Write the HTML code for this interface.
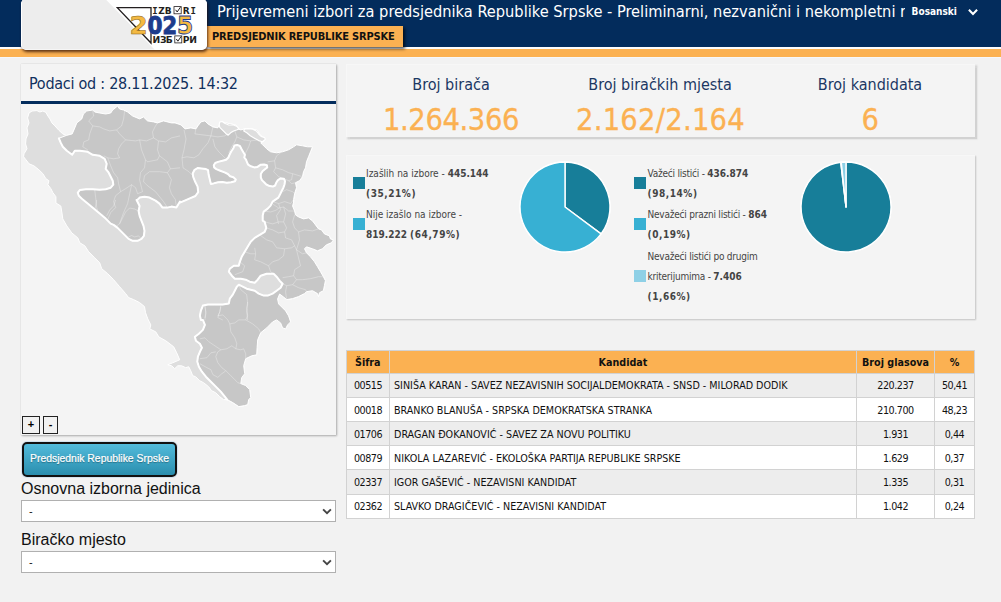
<!DOCTYPE html>
<html lang="bs">
<head>
<meta charset="utf-8">
<title>Prijevremeni izbori za predsjednika Republike Srpske</title>
<style>
html,body{margin:0;padding:0;}
body{width:1001px;height:602px;overflow:hidden;background:#f2f2f2;position:relative;
  font-family:"DejaVu Sans Condensed","Liberation Sans",sans-serif;color:#222;}
.abs{position:absolute;white-space:nowrap;}
.th{font-family:"DejaVu Sans Condensed","Liberation Sans",sans-serif;}
.ar{font-family:"Liberation Sans",sans-serif;}
#hdr{position:absolute;left:0;top:0;width:1001px;height:47px;background:#032c5c;}
#hwhite{position:absolute;left:0;top:47px;width:1001px;height:2px;background:#fbfcfd;}
#horange{position:absolute;left:0;top:49px;width:1001px;height:8px;background:#fbb152;}
#hlight{position:absolute;left:0;top:57px;width:1001px;height:1px;background:#f7f8fa;}
#title{left:217px;top:1px;width:688px;height:26px;overflow:hidden;color:#fff;font-size:16.25px;line-height:22px;}
#tab{left:207px;top:26px;width:196px;height:21px;background:#fbb152;box-shadow:2px 2px 3px rgba(0,0,0,.65);
  color:#111;font-weight:bold;font-size:11px;line-height:21px;}
#tab span{position:absolute;left:5px;top:0;letter-spacing:-0.17px;}
#lang{left:911.6px;top:5px;color:#fff;font-weight:bold;font-size:10px;line-height:14px;}
#logo{left:21px;top:-1px;width:186px;height:50.5px;border-radius:5px;background:#fff;
  box-shadow:1px 2px 3px rgba(40,10,0,.75);}
.panel{position:absolute;background:#f4f4f4;}
#lp{left:21px;top:64px;width:315px;height:371px;box-shadow:1px 1px 2px rgba(0,0,0,.28), 0 0 1px rgba(0,0,0,.18);}
#lpline{left:21px;top:101px;width:315px;height:3px;background:#032c5c;}
#podaci{left:29px;top:73.7px;font-size:16px;line-height:20px;color:#10305e;letter-spacing:-0.26px;}
#p1{left:346px;top:64px;width:629px;height:73px;box-shadow:1.5px 1.5px 1.5px 1px #d2d2d2, inset 1px 1px 0 #f7f7f7;}
#p2{left:346px;top:155px;width:629px;height:164px;box-shadow:1px 1px 1.5px rgba(0,0,0,.2), inset 1px 1px 0 #f7f7f7;}
.st{color:#1b3763;font-size:16px;line-height:20px;text-align:center;width:210px;}
.sv{color:#fbb152;-webkit-text-stroke:0.3px #fbb152;font-size:30.5px;line-height:36px;text-align:center;width:210px;letter-spacing:-0.4px;}
.zb{box-sizing:border-box;border:1px solid #222;background:#f1f1f1;color:#000;font-size:11px;font-weight:bold;text-align:center;line-height:15px;}
#btn{left:22px;top:442px;width:155px;height:35px;box-sizing:border-box;border:2px solid #111;border-radius:5px;
  background:linear-gradient(#52bbdb,#2a8eae);color:#fff;font-size:10.43px;line-height:30px;text-align:center;text-shadow:0 1px 1px rgba(0,0,0,.35);-webkit-text-stroke:0.2px #fff;box-shadow:0 0 0 1px rgba(200,220,235,.7);}
.lbl{font-size:16px;line-height:20px;color:#111;}
.sel{box-sizing:border-box;border:1px solid #b0b0b0;background:#fff;width:315px;height:22px;font-size:11px;line-height:20px;color:#111;}
.sel span{position:absolute;left:7px;top:0;}
.sel svg{position:absolute;right:2.3px;top:7px;}
.lg{font-size:10px;line-height:20px;color:#444;}
.lg b{color:#444;letter-spacing:0;}
.rl{letter-spacing:-0.22px;}
.lg .pc{letter-spacing:0.55px;}
.sq{position:absolute;width:12px;height:12px;}
table{position:absolute;left:346px;top:350px;border-collapse:collapse;font-size:10.67px;color:#111;table-layout:fixed;width:629px;}
td,th{border:1px solid #d2d2d2;padding:0;height:24px;box-sizing:border-box;}
th{background:#fbb152;font-weight:bold;height:23px;}
tr.o td{background:#ededed;}
tr.e td{background:#fff;}
td.c{text-align:center;letter-spacing:-0.45px;}
tr.r2 td,tr.r3 td,tr.r4 td{padding-top:2px;}
tr.r5 td{height:25px;}
td.l{text-align:left;padding-left:4px;}
</style>
</head>
<body>
<div id="hdr"></div><div id="hwhite"></div><div id="horange"></div><div id="hlight"></div>
<div id="title" class="abs th">Prijevremeni izbori za predsjednika Republike Srpske - Preliminarni, nezvanični i nekompletni rezultati</div>
<div id="tab" class="abs th"><span>PREDSJEDNIK REPUBLIKE SRPSKE</span></div>
<div id="lang" class="abs th">Bosanski</div>
<svg class="abs" style="left:967.2px;top:7.5px" width="12" height="9" viewBox="0 0 12 9"><path d="M1.9 1.8 L6 6 L10.1 1.8" fill="none" stroke="#fff" stroke-width="2.1"/></svg>
<div id="logo" class="abs"></div>
<svg class="abs" style="left:21px;top:0" width="190" height="52" viewBox="21 0 190 52">
<defs><clipPath id="lgc"><rect x="21" y="-1" width="186" height="50.5" rx="5" ry="5"/></clipPath></defs>
<g clip-path="url(#lgc)"><rect x="21" y="-6" width="186" height="56" fill="#fff"/><polygon points="22,-6 100.5,-6 155,50 22,50" fill="#ededed"/></g>
<path d="M117.3 7.6 H151 V43 Z" fill="none" stroke="#231f20" stroke-width="1.3" stroke-linejoin="miter"/>
<g font-family="'DejaVu Sans','Liberation Sans',sans-serif" font-weight="bold">
<text transform="translate(129.6 34) scale(1.07 1)" font-size="24.5" fill="#f4b942" stroke="#8a6516" stroke-width="0.5">2</text>
<text transform="translate(147.6 34) scale(0.88 1)" font-size="24.5" fill="#1d3c8c" stroke="#1d3c8c" stroke-width="0.9">0</text>
<text transform="translate(162.3 34) scale(0.88 1)" font-size="24.5" fill="#1d3c8c" stroke="#1d3c8c" stroke-width="0.8">2</text>
<text transform="translate(177 34) scale(0.95 1)" font-size="24.5" fill="#f4b942" stroke="#1d3c8c" stroke-width="0.9">5</text>
<text y="13.7" x="152.25 158.35 164.7" font-size="9" fill="#231f20"><tspan font-family="'DejaVu Sans Mono','Liberation Mono',monospace">I</tspan>ZB</text>
<text y="13.7" x="182.7 190.45" font-size="9" fill="#231f20">R<tspan font-family="'DejaVu Sans Mono','Liberation Mono',monospace">I</tspan></text>
<text y="42.9" x="152.4 159.9 165.7" font-size="9.2" fill="#231f20">ИЗБ</text>
<text y="42.9" x="182.7 189.2" font-size="9.2" fill="#231f20">РИ</text>
</g>
<rect x="174" y="6.6" width="7.2" height="7.2" fill="#fff" stroke="#231f20" stroke-width="0.8"/>
<path d="M175.6 9.8 L177.2 12 L180.4 7.2" fill="none" stroke="#231f20" stroke-width="1"/>
<rect x="174.8" y="35.9" width="7" height="7" fill="#fff" stroke="#231f20" stroke-width="0.8"/>
<path d="M176.3 39 L177.9 41.2 L181.2 36.4" fill="none" stroke="#231f20" stroke-width="1"/>
</svg>

<div id="lp" class="panel"></div>
<div id="lpline" class="abs"></div>
<div id="podaci" class="abs th">Podaci od : 28.11.2025. 14:32</div>
<!--MAPSTART--><svg class="abs" style="left:21px;top:104px" width="315" height="331" viewBox="21 104 315 331">
<path d="M66.2 135.5 L72.2 133.9 L74.8 127.9 L76.8 122.9 L81.8 118.9 L83.4 114.0 L86.7 111.0 L92.7 110.0 L94.7 112.0 L99.7 113.0 L105.7 114.0 L110.7 113.0 L112.7 110.0 L117.6 106.0 L119.6 109.0 L123.6 110.0 L127.6 112.0 L132.6 116.0 L139.6 118.9 L143.5 117.0 L147.5 120.9 L153.5 121.9 L157.5 122.9 L163.5 120.9 L171.4 122.9 L175.0 122.9 L181.0 124.9 L185.0 128.9 L190.9 127.9 L195.9 128.9 L197.9 125.9 L200.9 121.9 L204.9 120.9 L207.9 123.9 L212.9 126.9 L217.8 127.9 L219.8 123.9 L221.8 121.9 L225.8 122.9 L230.8 123.9 L235.8 124.9 L237.8 128.9 L240.8 129.9 L244.7 128.9 L251.7 128.9 L256.7 129.9 L259.7 133.9 L262.7 137.9 L264.7 140.9 L260.7 142.9 L262.7 144.8 L266.7 148.8 L270.6 151.8 L276.6 152.8 L282.6 151.8 L288.6 149.8 L293.6 146.8 L296.5 144.8 L302.5 145.8 L307.5 146.8 L312.5 146.8 L310.5 151.8 L308.5 156.8 L306.5 161.8 L305.5 167.8 L303.5 171.7 L302.5 176.7 L299.5 180.7 L295.5 182.7 L296.5 187.7 L294.6 193.7 L293.6 199.6 L293.6 202.0 L292.6 206.0 L294.6 211.0 L295.5 214.9 L298.5 216.9 L303.5 218.9 L308.5 217.9 L312.5 220.9 L315.5 224.9 L318.5 228.9 L321.5 229.9 L324.4 233.9 L329.4 235.9 L330.4 238.9 L333.4 239.9 L331.4 242.8 L326.4 244.8 L322.4 248.8 L317.5 250.8 L312.5 248.8 L306.5 246.8 L304.5 248.8 L306.5 252.8 L310.5 256.8 L314.5 261.8 L317.5 266.7 L320.5 271.7 L323.4 276.7 L325.4 280.7 L324.4 285.7 L323.4 290.7 L319.5 292.7 L318.5 296.6 L317.5 293.6 L312.5 290.7 L306.5 291.7 L304.5 293.6 L298.5 296.6 L292.6 298.6 L286.6 299.6 L283.6 297.0 L279.6 294.0 L277.6 299.0 L278.6 303.9 L282.6 307.9 L285.6 310.9 L288.6 315.9 L290.6 321.9 L287.6 324.9 L285.6 328.9 L282.6 327.9 L280.6 322.9 L276.6 319.9 L272.6 321.9 L266.7 327.9 L260.7 332.8 L257.7 339.8 L257.1 347.8 L256.7 354.8 L251.7 355.8 L245.7 358.7 L243.7 365.7 L244.7 373.7 L241.7 377.7 L240.8 383.6 L245.7 385.6 L249.7 389.6 L250.7 397.6 L248.7 399.6 L247.7 404.6 L244.7 405.6 L238.8 406.6 L232.8 402.6 L227.2 399.6 L223.5 399.6 L219.6 396.6 L215.6 392.7 L211.6 390.7 L208.6 386.7 L203.6 382.7 L199.6 380.7 L195.6 376.7 L192.7 375.7 L190.7 370.7 L188.7 366.7 L185.7 367.7 L181.7 365.8 L177.7 365.8 L174.7 368.7 L171.7 365.8 L167.7 364.8 L172.7 362.8 L179.7 359.8 L176.7 352.8 L173.7 346.8 L165.8 340.8 L158.8 336.9 L155.8 331.9 L149.8 328.9 L150.8 324.9 L147.8 318.9 L145.5 312.6 L144.5 306.6 L139.6 302.6 L133.6 299.6 L128.6 297.6 L125.6 293.6 L119.6 286.7 L113.6 279.7 L107.7 273.7 L101.7 268.7 L99.7 262.8 L94.7 257.8 L88.7 251.8 L84.8 245.8 L79.8 242.8 L77.8 237.9 L71.8 232.9 L66.8 225.9 L62.8 218.9 L61.8 212.0 L60.8 206.0 L55.9 203.0 L55.9 196.7 L52.9 192.7 L50.9 188.7 L47.9 184.7 L48.9 180.7 L45.9 178.7 L42.9 173.7 L38.9 169.8 L33.9 165.8 L29.0 163.8 L26.0 159.8 L23.6 156.8 L24.0 153.8 L27.0 148.8 L25.6 143.9 L26.0 138.9 L28.0 133.9 L27.0 127.9 L29.0 122.9 L27.6 117.9 L29.0 113.0 L32.0 111.0 L36.9 110.6 L39.9 112.0 L42.9 111.0 L45.9 112.4 L47.9 116.0 L49.9 118.9 L51.9 122.9 L54.9 125.9 L58.9 130.3 L62.8 133.9 Z" fill="#dedede" stroke="#fff" stroke-width="1" stroke-linejoin="round"/>
<path d="M58.9 138.3 L60.8 142.9 L62.8 146.8 L66.8 150.8 L72.2 154.8 L74.8 150.8 L79.8 150.8 L87.7 151.8 L92.7 154.8 L99.7 155.8 L104.7 158.8 L106.7 163.8 L105.7 168.8 L108.7 172.7 L110.7 176.7 L112.7 180.7 L113.3 184.7 L110.7 187.7 L105.7 189.3 L99.7 189.7 L92.7 189.3 L85.8 189.3 L79.8 190.1 L77.8 192.7 L78.8 195.7 L82.8 199.6 L87.7 203.6 L93.7 208.6 L99.7 213.6 L105.7 218.6 L110.7 223.6 L113.6 224.9 L117.6 227.9 L121.6 231.9 L125.6 235.9 L128.6 238.9 L132.6 240.8 L137.6 240.8 L141.5 238.9 L143.9 235.9 L144.5 230.9 L143.5 225.9 L141.5 220.9 L139.6 215.9 L138.6 211.0 L139.6 206.0 L137.6 202.0 L136.6 200.0 L137.6 199.6 L139.6 197.6 L144.5 196.7 L149.5 197.6 L155.5 200.6 L159.5 203.6 L162.5 207.6 L167.4 207.6 L171.4 206.6 L176.4 207.6 L180.0 201.6 L180.0 202.6 L187.0 199.6 L195.4 196.0 L198.2 192.1 L197.6 186.6 L194.9 181.2 L193.2 176.8 L192.7 173.5 L194.3 170.2 L197.6 168.0 L201.5 168.5 L205.9 169.1 L208.1 170.2 L208.6 174.6 L209.7 179.0 L210.8 183.9 L213.6 183.4 L218.0 182.3 L222.4 182.0 L226.8 182.8 L231.2 182.3 L235.0 181.2 L235.8 179.5 L233.4 177.3 L230.1 176.2 L227.9 174.0 L224.6 172.4 L220.2 170.7 L216.3 169.1 L214.1 167.4 L213.8 165.2 L215.2 163.0 L218.0 161.9 L222.4 160.8 L226.2 159.7 L228.4 157.5 L229.5 154.8 L231.2 151.5 L233.4 148.2 L234.5 145.4 L237.2 144.9 L239.9 146.0 L241.6 149.3 L243.2 152.0 L244.9 154.8 L244.3 157.5 L246.0 159.7 L247.1 162.5 L248.2 164.7 L250.9 166.3 L254.2 167.4 L257.5 166.9 L260.8 164.7 L264.1 164.5 L266.9 165.2 L267.2 167.4 L265.2 169.1 L262.5 171.3 L260.8 174.0 L260.8 177.3 L261.9 180.1 L264.1 182.3 L266.3 184.5 L269.6 186.1 L272.9 186.6 L275.1 185.5 L276.2 182.8 L277.9 180.1 L280.6 178.4 L283.9 178.7 L285.0 181.2 L284.5 184.5 L283.4 187.7 L281.7 191.0 L280.1 194.3 L278.4 197.6 L272.6 201.6 L270.6 205.6 L267.7 208.6 L263.7 211.6 L262.7 215.6 L262.7 220.6 L264.7 221.9 L266.3 227.9 L264.7 231.9 L259.7 234.9 L254.7 237.9 L250.7 241.8 L247.7 246.8 L244.7 251.8 L241.7 256.8 L239.8 261.8 L238.8 265.8 L233.8 265.8 L229.8 268.7 L228.8 271.7 L231.8 275.7 L234.8 278.7 L240.8 278.7 L245.7 279.7 L249.7 281.7 L254.7 282.7 L257.7 279.7 L260.7 275.7 L266.7 273.7 L273.6 273.7 L276.6 276.7 L279.6 280.7 L282.6 283.7 L280.6 287.7 L276.6 290.7 L272.6 293.6 L267.7 295.6 L263.7 295.6 L258.7 293.6 L254.7 290.7 L250.7 289.7 L246.7 288.7 L242.7 286.7 L238.8 284.7 L236.8 286.7 L234.8 290.7 L232.8 294.6 L229.8 298.6 L228.8 303.6 L222.8 304.6 L214.9 304.6 L207.9 304.6 L202.9 305.6 L200.9 310.6 L199.9 315.6 L200.9 320.0 L202.9 319.9 L204.9 324.9 L202.9 329.9 L198.9 333.8 L194.9 336.8 L195.9 340.8 L199.9 343.8 L201.9 347.8 L199.9 351.8 L197.9 356.7 L197.3 361.7 L198.9 366.7 L201.9 371.7 L205.9 376.7 L210.9 381.7 L215.8 386.6 L220.8 391.6 L224.8 396.6 L227.2 399.6 L227.2 399.6 L232.8 402.6 L238.8 406.6 L244.7 405.6 L247.7 404.6 L248.7 399.6 L250.7 397.6 L249.7 389.6 L245.7 385.6 L240.8 383.6 L241.7 377.7 L244.7 373.7 L243.7 365.7 L245.7 358.7 L251.7 355.8 L256.7 354.8 L257.1 347.8 L257.7 339.8 L260.7 332.8 L266.7 327.9 L272.6 321.9 L276.6 319.9 L280.6 322.9 L282.6 327.9 L285.6 328.9 L287.6 324.9 L290.6 321.9 L288.6 315.9 L285.6 310.9 L282.6 307.9 L278.6 303.9 L277.6 299.0 L279.6 294.0 L283.6 297.0 L286.6 299.6 L292.6 298.6 L298.5 296.6 L304.5 293.6 L306.5 291.7 L312.5 290.7 L317.5 293.6 L318.5 296.6 L319.5 292.7 L323.4 290.7 L324.4 285.7 L325.4 280.7 L323.4 276.7 L320.5 271.7 L317.5 266.7 L314.5 261.8 L310.5 256.8 L306.5 252.8 L304.5 248.8 L306.5 246.8 L312.5 248.8 L317.5 250.8 L322.4 248.8 L326.4 244.8 L331.4 242.8 L333.4 239.9 L330.4 238.9 L329.4 235.9 L324.4 233.9 L321.5 229.9 L318.5 228.9 L315.5 224.9 L312.5 220.9 L308.5 217.9 L303.5 218.9 L298.5 216.9 L295.5 214.9 L294.6 211.0 L292.6 206.0 L293.6 202.0 L293.6 199.6 L294.6 193.7 L296.5 187.7 L295.5 182.7 L299.5 180.7 L302.5 176.7 L303.5 171.7 L305.5 167.8 L306.5 161.8 L308.5 156.8 L310.5 151.8 L312.5 146.8 L307.5 146.8 L302.5 145.8 L296.5 144.8 L293.6 146.8 L288.6 149.8 L282.6 151.8 L276.6 152.8 L270.6 151.8 L266.7 148.8 L262.7 144.8 L260.7 142.9 L264.7 140.9 L262.7 137.9 L259.7 133.9 L256.7 129.9 L251.7 128.9 L244.7 128.9 L240.8 129.9 L237.8 128.9 L235.8 124.9 L230.8 123.9 L225.8 122.9 L221.8 121.9 L219.8 123.9 L217.8 127.9 L212.9 126.9 L207.9 123.9 L204.9 120.9 L200.9 121.9 L197.9 125.9 L195.9 128.9 L190.9 127.9 L185.0 128.9 L181.0 124.9 L175.0 122.9 L171.4 122.9 L163.5 120.9 L157.5 122.9 L153.5 121.9 L147.5 120.9 L143.5 117.0 L139.6 118.9 L132.6 116.0 L127.6 112.0 L123.6 110.0 L119.6 109.0 L117.6 106.0 L112.7 110.0 L110.7 113.0 L105.7 114.0 L99.7 113.0 L94.7 112.0 L92.7 110.0 L86.7 111.0 L83.4 114.0 L81.8 118.9 L76.8 122.9 L74.8 127.9 L72.2 133.9 L66.2 135.5 Z" fill="#c7c7c7" stroke="#fff" stroke-width="1" stroke-linejoin="round"/>
<path d="M58.9 138.3 L60.8 142.9 L62.8 146.8 L66.8 150.8 L72.2 154.8 L74.8 150.8 L79.8 150.8 L87.7 151.8 L92.7 154.8 L99.7 155.8 L104.7 158.8 L106.7 163.8 L105.7 168.8 L108.7 172.7 L110.7 176.7 L112.7 180.7 L113.3 184.7 L110.7 187.7 L105.7 189.3 L99.7 189.7 L92.7 189.3 L85.8 189.3 L79.8 190.1 L77.8 192.7 L78.8 195.7 L82.8 199.6 L87.7 203.6 L93.7 208.6 L99.7 213.6 L105.7 218.6 L110.7 223.6 L113.6 224.9 L117.6 227.9 L121.6 231.9 L125.6 235.9 L128.6 238.9 L132.6 240.8 L137.6 240.8 L141.5 238.9 L143.9 235.9 L144.5 230.9 L143.5 225.9 L141.5 220.9 L139.6 215.9 L138.6 211.0 L139.6 206.0 L137.6 202.0 L136.6 200.0 L137.6 199.6 L139.6 197.6 L144.5 196.7 L149.5 197.6 L155.5 200.6 L159.5 203.6 L162.5 207.6 L167.4 207.6 L171.4 206.6 L176.4 207.6 L180.0 201.6 L180.0 202.6 L187.0 199.6 L195.4 196.0 L198.2 192.1 L197.6 186.6 L194.9 181.2 L193.2 176.8 L192.7 173.5 L194.3 170.2 L197.6 168.0 L201.5 168.5 L205.9 169.1 L208.1 170.2 L208.6 174.6 L209.7 179.0 L210.8 183.9 L213.6 183.4 L218.0 182.3 L222.4 182.0 L226.8 182.8 L231.2 182.3 L235.0 181.2 L235.8 179.5 L233.4 177.3 L230.1 176.2 L227.9 174.0 L224.6 172.4 L220.2 170.7 L216.3 169.1 L214.1 167.4 L213.8 165.2 L215.2 163.0 L218.0 161.9 L222.4 160.8 L226.2 159.7 L228.4 157.5 L229.5 154.8 L231.2 151.5 L233.4 148.2 L234.5 145.4 L237.2 144.9 L239.9 146.0 L241.6 149.3 L243.2 152.0 L244.9 154.8 L244.3 157.5 L246.0 159.7 L247.1 162.5 L248.2 164.7 L250.9 166.3 L254.2 167.4 L257.5 166.9 L260.8 164.7 L264.1 164.5 L266.9 165.2 L267.2 167.4 L265.2 169.1 L262.5 171.3 L260.8 174.0 L260.8 177.3 L261.9 180.1 L264.1 182.3 L266.3 184.5 L269.6 186.1 L272.9 186.6 L275.1 185.5 L276.2 182.8 L277.9 180.1 L280.6 178.4 L283.9 178.7 L285.0 181.2 L284.5 184.5 L283.4 187.7 L281.7 191.0 L280.1 194.3 L278.4 197.6 L272.6 201.6 L270.6 205.6 L267.7 208.6 L263.7 211.6 L262.7 215.6 L262.7 220.6 L264.7 221.9 L266.3 227.9 L264.7 231.9 L259.7 234.9 L254.7 237.9 L250.7 241.8 L247.7 246.8 L244.7 251.8 L241.7 256.8 L239.8 261.8 L238.8 265.8 L233.8 265.8 L229.8 268.7 L228.8 271.7 L231.8 275.7 L234.8 278.7 L240.8 278.7 L245.7 279.7 L249.7 281.7 L254.7 282.7 L257.7 279.7 L260.7 275.7 L266.7 273.7 L273.6 273.7 L276.6 276.7 L279.6 280.7 L282.6 283.7 L280.6 287.7 L276.6 290.7 L272.6 293.6 L267.7 295.6 L263.7 295.6 L258.7 293.6 L254.7 290.7 L250.7 289.7 L246.7 288.7 L242.7 286.7 L238.8 284.7 L236.8 286.7 L234.8 290.7 L232.8 294.6 L229.8 298.6 L228.8 303.6 L222.8 304.6 L214.9 304.6 L207.9 304.6 L202.9 305.6 L200.9 310.6 L199.9 315.6 L200.9 320.0 L202.9 319.9 L204.9 324.9 L202.9 329.9 L198.9 333.8 L194.9 336.8 L195.9 340.8 L199.9 343.8 L201.9 347.8 L199.9 351.8 L197.9 356.7 L197.3 361.7 L198.9 366.7 L201.9 371.7 L205.9 376.7 L210.9 381.7 L215.8 386.6 L220.8 391.6 L224.8 396.6 L227.2 399.6" fill="none" stroke="#fff" stroke-width="2" stroke-linejoin="round" stroke-linecap="round"/>
<path d="M219.8 122.0 L222.2 121.4 L224.6 123.2 L228.8 125.0 L233.6 125.0 L236.6 126.2 L239.0 128.6 L237.2 129.8 L233.6 131.0 L230.6 132.8 L228.2 135.2 L225.8 133.4 L222.8 130.4 L219.8 127.4 L219.2 124.4 Z" fill="#dedede" stroke="#fff" stroke-width="1.2" stroke-linejoin="round"/>
<path d="M244.4 129.2 L248.0 128.6 L252.7 129.2 L256.3 131.0 L258.7 134.0 L261.1 136.4 L264.7 137.6 L265.3 139.4 L262.3 141.8 L258.7 140.6 L254.5 138.2 L250.3 135.8 L246.8 132.8 L243.8 131.0 Z" fill="#dedede" stroke="#fff" stroke-width="1.2" stroke-linejoin="round"/>
<path d="M92.7 111.0 L93.7 116.0 L88.7 120.9 L92.7 125.9 L99.7 126.9 L103.7 128.9 L109.7 130.9 L116.6 129.9 L121.6 125.9 L123.6 118.9 L124.6 111.0 M92.7 125.9 L89.7 133.9 L88.7 139.9 L83.8 141.9 L82.8 146.8 L87.7 149.8 M116.6 129.9 L119.6 133.9 L125.6 139.9 L121.6 143.9 L118.6 148.8 L117.6 153.8 L119.6 157.8 L113.6 158.8 L107.7 157.8 L103.7 155.8 M125.6 139.9 L135.6 140.9 L139.6 139.9 L146.5 140.9 L153.5 137.9 L152.5 131.9 L155.5 125.9 L157.5 122.9 M139.6 139.9 L141.5 149.8 L145.5 159.8 L144.5 167.8 L140.5 172.7 L139.6 179.7 L141.5 187.7 L142.5 191.7 L137.6 193.7 L135.6 187.7 L131.6 184.7 L125.6 188.7 L120.6 191.7 L118.6 183.7 L117.6 177.7 L113.6 172.7 L110.7 165.8 L107.7 157.8 M153.5 137.9 L158.5 140.9 L157.5 149.8 L159.5 155.8 L157.5 159.8 L147.5 161.8 L145.5 159.8 M159.5 155.8 L167.4 161.8 L170.4 168.8 L167.4 172.7 L171.4 179.7 L169.4 187.7 L171.4 193.7 L175.4 199.6 L176.4 207.6 M167.4 172.7 L159.5 171.7 L149.5 171.7 L144.5 175.7 L143.5 181.7 L147.5 185.7 L155.5 191.7 L163.5 201.6 L167.4 207.6 M158.5 140.9 L165.5 141.9 L171.4 137.9 L180.0 135.9 M170.4 168.8 L180.0 167.8 M120.6 191.7 L115.6 195.7 L113.6 201.6 L115.6 207.6 L110.7 212.6 L107.7 219.6 M94.7 189.7 L95.7 197.6 L96.7 207.6 L97.7 210.6 M131.6 184.7 L127.6 203.6 L123.6 212.6 L119.6 223.6 M184.0 129.9 L186.0 138.9 L184.0 149.8 L182.0 157.8 L183.0 167.8 M195.9 128.9 L194.9 133.9 L202.9 134.9 L210.9 135.9 L212.9 126.9 M210.9 135.9 L207.9 142.9 L202.9 148.8 L198.9 154.8 L193.9 157.8 L187.0 156.8 L182.0 157.8 M210.9 135.9 L217.8 136.9 L224.8 135.9 L227.8 133.9 M212.9 138.9 L214.9 146.8 L218.8 151.8 L223.8 156.8 L225.8 158.8 M234.8 130.9 L236.8 136.9 L234.8 141.9 L231.8 146.8 L228.8 152.8 M236.8 136.9 L243.7 139.9 L250.7 140.9 L257.7 139.9 M250.7 140.9 L248.7 146.8 L244.7 154.8 M267.7 161.8 L274.6 160.8 L276.6 155.8 L280.6 152.8 M274.6 160.8 L275.6 167.8 L273.6 171.7 L278.6 176.7 L283.6 178.7 M275.6 167.8 L282.6 169.8 L288.6 172.7 L292.6 173.7 L291.6 179.7 L288.6 180.7 L283.6 178.7 M292.6 173.7 L302.5 176.7 M288.6 180.7 L291.6 183.7 L295.5 182.7 M282.6 191.7 L286.6 189.7 L292.6 191.7 L294.6 193.7 M272.6 201.6 L278.6 203.6 L284.6 201.6 L290.6 203.6 L293.6 199.6 M278.6 203.6 L280.6 209.6 L276.6 215.6 L278.6 224.0 M183.0 167.8 L188.9 171.7 L192.9 175.7 M272.6 204.0 L278.6 208.0 L283.6 207.0 L288.6 211.0 L294.6 211.0 M263.7 211.0 L270.6 212.0 L276.6 210.0 L278.6 208.0 M283.6 207.0 L285.6 213.9 L283.6 221.9 L286.6 227.9 L284.6 231.9 L285.6 237.9 L291.6 239.9 L294.6 245.8 L296.5 249.8 M264.7 221.9 L272.6 223.9 L278.6 221.9 L283.6 221.9 M266.3 227.9 L272.6 229.9 L278.6 232.9 L284.6 231.9 M294.6 214.9 L292.6 221.9 L294.6 227.9 L298.5 231.9 L304.5 229.9 L312.5 230.9 L318.5 228.9 M298.5 231.9 L299.5 239.9 L296.5 249.8 L302.5 253.8 L306.5 252.8 M259.7 234.9 L266.7 239.9 L272.6 241.8 L276.6 247.8 L284.6 248.8 L291.6 247.8 L294.6 245.8 M284.6 248.8 L283.6 255.8 L278.6 259.8 L272.6 261.8 L268.6 265.8 L270.6 271.7 L273.6 273.7 M254.7 247.8 L255.7 253.8 L254.7 259.8 L260.7 261.8 L268.6 265.8 M244.7 251.8 L250.7 253.8 L255.7 253.8 M239.8 261.8 L244.7 265.8 L242.7 271.7 L234.8 274.7 M296.5 249.8 L298.5 257.8 L300.5 265.8 L294.6 269.7 L293.6 275.7 L296.5 279.7 L302.5 279.7 L310.5 278.7 L318.5 276.7 L323.4 276.7 M282.6 277.7 L288.6 276.7 L293.6 275.7 M296.5 279.7 L292.6 284.7 L286.6 285.7 L282.6 283.7 M286.6 285.7 L285.6 291.7 L286.6 299.6 M292.6 284.7 L298.5 287.7 L305.5 289.7 L306.5 291.7 M238.8 284.7 L240.8 289.7 L246.7 294.6 L247.7 303.6 L246.7 311.6 L247.7 320.0 M204.9 305.6 L205.9 313.6 L204.9 320.0 M220.8 305.6 L219.8 311.6 L217.8 317.6 L222.8 320.0 M247.7 302.0 L246.7 307.9 L247.7 315.9 L245.7 319.9 M204.9 305.9 L205.9 311.9 L204.9 317.9 M220.8 306.9 L219.8 311.9 L217.8 315.9 L222.8 314.9 L227.8 319.9 L229.8 323.9 L234.8 322.9 L238.8 319.9 L245.7 319.9 L252.7 323.9 L258.7 328.9 L260.7 332.8 M229.8 323.9 L230.8 331.8 L234.8 337.8 L236.8 343.8 L235.8 348.8 L240.8 349.8 L243.7 348.8 L245.7 353.8 L245.7 358.7 M235.8 348.8 L231.8 345.8 L226.8 348.8 L220.8 349.8 L214.9 345.8 L208.9 341.8 L204.9 337.8 L199.9 338.8 M220.8 349.8 L217.8 351.8 L215.8 356.7 L217.8 362.7 L221.8 367.7 L225.8 370.7 L230.8 375.7 L234.8 379.7 L237.8 382.7 L240.8 383.6 M215.8 351.8 L210.9 352.8 L206.9 357.7 L199.9 358.7 M199.9 363.7 L206.9 367.7 L210.9 369.7 L212.9 374.7 L217.8 377.3 L221.8 373.7 L224.8 371.7 L225.8 370.7 M96.7 200.0 L95.7 206.0 L94.7 209.0 M115.6 200.0 L113.6 206.0 L109.7 210.0 L106.7 215.9 M129.6 208.0 L125.6 212.0 L122.6 217.9 L119.6 223.9 L116.6 225.9 M129.6 208.0 L134.6 209.0 L138.6 211.0 M128.6 236.9 L131.6 235.5 L134.6 236.9 L138.6 235.9 L141.5 238.9" fill="none" stroke="#fff" stroke-opacity="0.5" stroke-width="0.6" stroke-linejoin="round"/>
</svg><!--MAPEND-->
<div class="abs zb ar" style="left:22px;top:416px;width:18px;height:18px;">+</div>
<div class="abs zb ar" style="left:43px;top:416px;width:15px;height:18px;">-</div>
<div id="btn" class="abs ar">Predsjednik Republike Srpske</div>
<div class="abs lbl ar" style="left:21px;top:479px;">Osnovna izborna jedinica</div>
<div class="abs sel ar" style="left:21px;top:500px;"><span>-</span><svg width="12" height="8" viewBox="0 0 12 8"><path d="M2.1 1.4 L6 5.2 L9.9 1.4" fill="none" stroke="#444" stroke-width="1.9"/></svg></div>
<div class="abs lbl ar" style="left:21px;top:530px;">Biračko mjesto</div>
<div class="abs sel ar" style="left:21px;top:551px;"><span>-</span><svg width="12" height="8" viewBox="0 0 12 8"><path d="M2.1 1.4 L6 5.2 L9.9 1.4" fill="none" stroke="#444" stroke-width="1.9"/></svg></div>

<div id="p1" class="panel"></div>
<div class="abs st th" style="left:346px;top:75px;">Broj birača</div>
<div class="abs sv th" style="left:346px;top:102px;">1.264.366</div>
<div class="abs st th" style="left:555px;top:75px;">Broj biračkih mjesta</div>
<div class="abs sv th" style="left:555.5px;top:102px;letter-spacing:0.25px">2.162/2.164</div>
<div class="abs st th" style="left:765px;top:75px;">Broj kandidata</div>
<div class="abs sv th" style="left:765px;top:102px;">6</div>

<div id="p2" class="panel"></div>

<div class="sq" style="left:353px;top:177px;background:#177e99"></div>
<div class="abs lg th" style="left:366px;top:164px;">Izašlih na izbore - <b>445.144</b><br><b class="pc">(35,21%)</b></div>
<div class="sq" style="left:353px;top:218px;background:#37b0d3"></div>
<div class="abs lg th" style="left:366px;top:205px;">Nije izašlo na izbore -<br><b>819.222 <span class="pc">(64,79%)</span></b></div>
<div class="sq" style="left:634px;top:177px;background:#177e99"></div>
<div class="abs lg rl th" style="left:647.5px;top:164px;">Važeći listići - <b>436.874</b><br><b class="pc">(98,14%)</b></div>
<div class="sq" style="left:634px;top:218px;background:#37b0d3"></div>
<div class="abs lg rl th" style="left:647.5px;top:205px;">Nevažeći prazni listići - <b>864</b><br><b class="pc">(0,19%)</b></div>
<div class="sq" style="left:634px;top:270px;background:#8ed0e6"></div>
<div class="abs lg rl th" style="left:647.5px;top:247.3px;">Nevažeći listići po drugim<br>kriterijumima - <b>7.406</b><br><b class="pc">(1,66%)</b></div>

<svg class="abs" style="left:515px;top:157px" width="100" height="100" viewBox="515 157 100 100"><circle cx="565" cy="207" r="45.7" fill="#fff"/><path d="M565 207 L565.00 162.00 A45 45 0 0 1 601.05 233.93 Z" fill="#177e99" stroke="#fff" stroke-width="1.4" stroke-linejoin="round"/><path d="M565 207 L601.05 233.93 A45 45 0 1 1 565.00 162.00 Z" fill="#37b0d3" stroke="#fff" stroke-width="1.4" stroke-linejoin="round"/></svg>
<svg class="abs" style="left:796px;top:157px" width="100" height="100" viewBox="796 157 100 100"><circle cx="846" cy="207" r="45.7" fill="#fff"/><path d="M846 207 L846.00 162.00 A45 45 0 1 1 840.75 162.31 Z" fill="#177e99" stroke="#fff" stroke-width="1.4" stroke-linejoin="round"/><path d="M846 207 L840.75 162.31 A45 45 0 0 1 841.29 162.25 Z" fill="#37b0d3" stroke="#fff" stroke-width="1.4" stroke-linejoin="round"/><path d="M846 207 L841.29 162.25 A45 45 0 0 1 845.97 162.00 Z" fill="#8ed0e6" stroke="#fff" stroke-width="1.4" stroke-linejoin="round"/></svg>
<table class="th"><colgroup><col style="width:43px"><col style="width:467px"><col style="width:78px"><col style="width:40px"></colgroup>
<tr><th class="l" style="text-align:left;padding-left:8px">Šifra</th><th>Kandidat</th><th>Broj glasova</th><th>%</th></tr>
<tr class="o r1"><td class="c">00515</td><td class="l">SINIŠA KARAN - SAVEZ NEZAVISNIH SOCIJALDEMOKRATA - SNSD - MILORAD DODIK</td><td class="c">220.237</td><td class="c">50,41</td></tr>
<tr class="e r2"><td class="c">00018</td><td class="l">BRANKO BLANUŠA - SRPSKA DEMOKRATSKA STRANKA</td><td class="c">210.700</td><td class="c">48,23</td></tr>
<tr class="o r3"><td class="c">01706</td><td class="l">DRAGAN ĐOKANOVIĆ - SAVEZ ZA NOVU POLITIKU</td><td class="c">1.931</td><td class="c">0,44</td></tr>
<tr class="e r4"><td class="c">00879</td><td class="l">NIKOLA LAZAREVIĆ - EKOLOŠKA PARTIJA REPUBLIKE SRPSKE</td><td class="c">1.629</td><td class="c">0,37</td></tr>
<tr class="o r5"><td class="c">02337</td><td class="l">IGOR GAŠEVIĆ - NEZAVISNI KANDIDAT</td><td class="c">1.335</td><td class="c">0,31</td></tr>
<tr class="e r6"><td class="c">02362</td><td class="l">SLAVKO DRAGIČEVIĆ - NEZAVISNI KANDIDAT</td><td class="c">1.042</td><td class="c">0,24</td></tr>
</table>
</body>
</html>
